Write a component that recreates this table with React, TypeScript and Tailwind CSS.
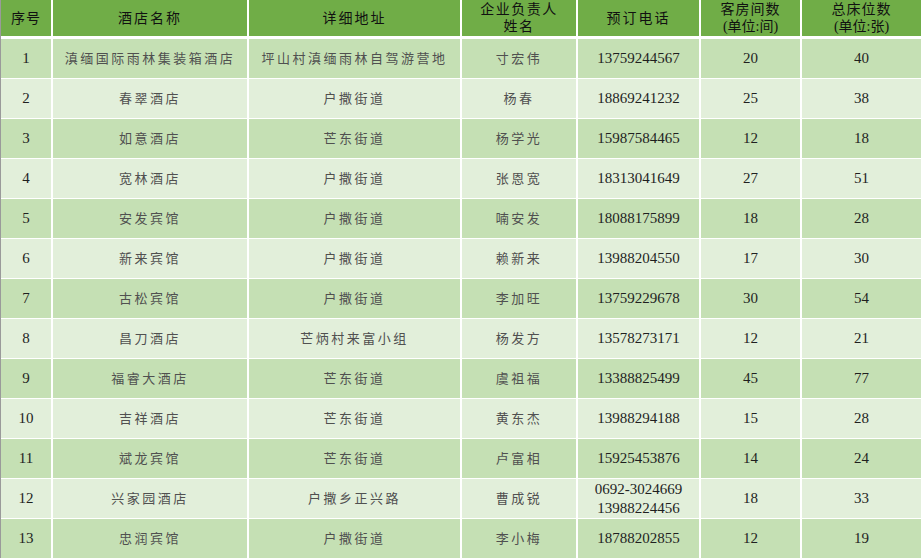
import React from "react";

// Hotel list rows
interface Hotel {
  no: number;
  name: string;
  address: string;
  owner: string;
  phone: string[];
  rooms: number;
  beds: number;
}

const hotels: Hotel[] = [
  { no: 1, name: "滇缅国际雨林集装箱酒店", address: "坪山村滇缅雨林自驾游营地", owner: "寸宏伟", phone: ["13759244567"], rooms: 20, beds: 40 },
  { no: 2, name: "春翠酒店", address: "户撒街道", owner: "杨春", phone: ["18869241232"], rooms: 25, beds: 38 },
  { no: 3, name: "如意酒店", address: "芒东街道", owner: "杨学光", phone: ["15987584465"], rooms: 12, beds: 18 },
  { no: 4, name: "宽林酒店", address: "户撒街道", owner: "张恩宽", phone: ["18313041649"], rooms: 27, beds: 51 },
  { no: 5, name: "安发宾馆", address: "户撒街道", owner: "喃安发", phone: ["18088175899"], rooms: 18, beds: 28 },
  { no: 6, name: "新来宾馆", address: "户撒街道", owner: "赖新来", phone: ["13988204550"], rooms: 17, beds: 30 },
  { no: 7, name: "古松宾馆", address: "户撒街道", owner: "李加旺", phone: ["13759229678"], rooms: 30, beds: 54 },
  { no: 8, name: "昌刀酒店", address: "芒炳村来富小组", owner: "杨发方", phone: ["13578273171"], rooms: 12, beds: 21 },
  { no: 9, name: "福睿大酒店", address: "芒东街道", owner: "虞祖福", phone: ["13388825499"], rooms: 45, beds: 77 },
  { no: 10, name: "吉祥酒店", address: "芒东街道", owner: "黄东杰", phone: ["13988294188"], rooms: 15, beds: 28 },
  { no: 11, name: "斌龙宾馆", address: "芒东街道", owner: "卢富相", phone: ["15925453876"], rooms: 14, beds: 24 },
  { no: 12, name: "兴家园酒店", address: "户撒乡正兴路", owner: "曹成锐", phone: ["0692-3024669", "13988224456"], rooms: 18, beds: 33 },
  { no: 13, name: "忠润宾馆", address: "户撒街道", owner: "李小梅", phone: ["18788202855"], rooms: 12, beds: 19 },
];

const cols = "grid grid-cols-[50px_194px_211px_114px_121px_99px_119px] gap-x-[2px]";
const cjk = "text-[13px] tracking-[2.5px] text-[#505050]";
const num = "text-[15px] text-[#1f1f1f]";

export default function App() {
  return (
    <div
      className="w-[922px] h-[558px] overflow-hidden bg-white border-l border-[#9a9a9a]"
      style={{ fontFamily: "'Liberation Serif', 'Noto Sans CJK SC', serif" }}
    >
      {/* Header */}
      <div className={`${cols} h-[36px] mb-[3px] text-[14px] text-[#111] leading-[17px]`}>
        <div className="bg-[#70ad47] flex items-center justify-center tracking-[1px]">序号</div>
        <div className="bg-[#70ad47] flex items-center justify-center tracking-[2px]">酒店名称</div>
        <div className="bg-[#70ad47] flex items-center justify-center tracking-[2px]">详细地址</div>
        <div className="bg-[#70ad47] flex flex-col items-center justify-center tracking-[1.5px]">
          <span>企业负责人</span>
          <span>姓名</span>
        </div>
        <div className="bg-[#70ad47] flex items-center justify-center tracking-[2px]">预订电话</div>
        <div className="bg-[#70ad47] flex flex-col items-center justify-center tracking-[1px]">
          <span>客房间数</span>
          <span className="tracking-normal">(单位:间)</span>
        </div>
        <div className="bg-[#70ad47] flex flex-col items-center justify-center tracking-[1px]">
          <span>总床位数</span>
          <span className="tracking-normal">(单位:张)</span>
        </div>
      </div>

      {/* Rows */}
      {hotels.map((h) => {
        const bg = h.no % 2 === 1 ? "bg-[#c5e0b4]" : "bg-[#e2efda]";
        const cell = `${bg} flex items-center justify-center`;
        return (
          <div key={h.no} className={`${cols} h-[39px] mb-px`}>
            <div className={`${cell} ${num}`}>{h.no}</div>
            <div className={`${cell} ${cjk}`}>{h.name}</div>
            <div className={`${cell} ${cjk}`}>{h.address}</div>
            <div className={`${cell} ${cjk}`}>{h.owner}</div>
            <div className={`${cell} ${num} flex-col leading-[19px]`}>
              {h.phone.map((p) => (
                <span key={p}>{p}</span>
              ))}
            </div>
            <div className={`${cell} ${num}`}>{h.rooms}</div>
            <div className={`${cell} ${num}`}>{h.beds}</div>
          </div>
        );
      })}
    </div>
  );
}
